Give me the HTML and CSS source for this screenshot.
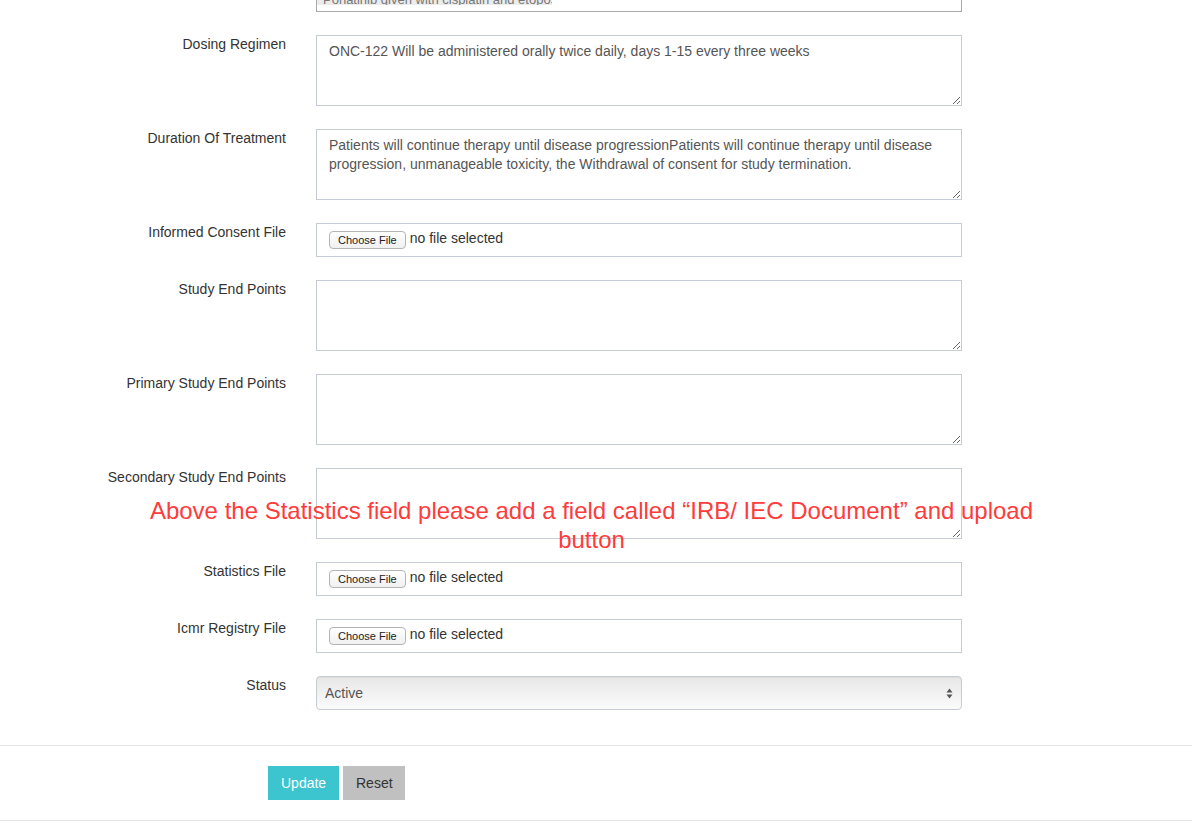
FILE: index.html
```html
<!DOCTYPE html>
<html lang="en">
<head>
    <meta charset="UTF-8">
    <meta name="viewport" content="width=device-width, initial-scale=1.0">
    <title>Edit Study</title>
    <link rel="stylesheet" href="styles.css">
</head>
<body>
    <div class="page">
        <form class="form-horizontal">
            <div class="form-group">
                <div class="label"></div>
                <div class="clipped-box">
                    <span class="tag">Ponatinib given with cisplatin and etoposide</span>
                </div>
            </div>

            <div class="form-group">
                <label class="label">Dosing Regimen</label>
                <textarea class="form-control" rows="3">ONC-122 Will be administered orally twice daily, days 1-15 every three weeks</textarea>
            </div>

            <div class="form-group">
                <label class="label">Duration Of Treatment</label>
                <textarea class="form-control" rows="3">Patients will continue therapy until disease progressionPatients will continue therapy until disease progression, unmanageable toxicity, the Withdrawal of consent for study termination.</textarea>
            </div>

            <div class="form-group">
                <label class="label">Informed Consent File</label>
                <div class="file-box">
                    <span class="file-btn">Choose File</span>
                    <span class="file-name">no file selected</span>
                </div>
            </div>

            <div class="form-group">
                <label class="label">Study End Points</label>
                <textarea class="form-control" rows="3"></textarea>
            </div>

            <div class="form-group">
                <label class="label">Primary Study End Points</label>
                <textarea class="form-control" rows="3"></textarea>
            </div>

            <div class="form-group">
                <label class="label">Secondary Study End Points</label>
                <textarea class="form-control" rows="3"></textarea>
            </div>

            <div class="form-group">
                <label class="label">Statistics File</label>
                <div class="file-box">
                    <span class="file-btn">Choose File</span>
                    <span class="file-name">no file selected</span>
                </div>
            </div>

            <div class="form-group">
                <label class="label">Icmr Registry File</label>
                <div class="file-box">
                    <span class="file-btn">Choose File</span>
                    <span class="file-name">no file selected</span>
                </div>
            </div>

            <div class="form-group">
                <label class="label">Status</label>
                <div class="select-box">
                    <span>Active</span>
                    <svg class="updown" width="7" height="11" viewBox="0 0 7 11">
                        <path d="M3.5 0.5 L6.5 4.5 L0.5 4.5 Z" fill="#555"/>
                        <path d="M3.5 10.5 L6.5 6.5 L0.5 6.5 Z" fill="#555"/>
                    </svg>
                </div>
            </div>

            <div class="form-actions">
                <button type="button" class="btn btn-update">Update</button>
                <button type="button" class="btn btn-reset">Reset</button>
            </div>
        </form>

        <!-- review note pasted over the screenshot -->
        <div class="note">Above the Statistics field please add a field called “IRB/ IEC Document” and upload button</div>
    </div>
</body>
</html>
```

FILE: styles.css
```css
body {
    margin: 0;
    background: #fff;
    font-family: "Liberation Sans", Arial, sans-serif;
    font-size: 14px;
    color: #333;
}
.page {
    position: relative;
}
.form-group {
    display: flex;
    gap: 30px;
    margin-bottom: 23px;
}
.label {
    width: 286px;
    flex: none;
    text-align: right;
    line-height: 18px;
}
.form-control {
    box-sizing: border-box;
    width: 646px;
    height: 71px;
    margin: 0;
    padding: 6px 12px;
    border: 1px solid #c5ccd6;
    border-radius: 0;
    font-family: "Liberation Sans", Arial, sans-serif;
    font-size: 14px;
    line-height: 19px;
    color: #555;
    resize: vertical;
    outline: none;
}
.clipped-box {
    box-sizing: border-box;
    width: 646px;
    height: 12px;
    border: 1px solid #a9a9a9;
    border-top: none;
    overflow: hidden;
}
.tag {
    display: block;
    width: 235px;
    height: 5px;
    background: #ececec;
    color: #777;
    font-size: 13px;
    line-height: 0;
    overflow: hidden;
    white-space: nowrap;
    padding-left: 6px;
    box-sizing: border-box;
}
.file-box {
    box-sizing: border-box;
    width: 646px;
    height: 34px;
    border: 1px solid #c5ccd6;
    padding: 0 12px 4px;
    display: flex;
    align-items: center;
    gap: 4px;
}
.file-btn {
    box-sizing: border-box;
    height: 18px;
    padding: 0 8px;
    border: 1px solid #b4b4b4;
    border-radius: 4px;
    background: linear-gradient(#fff, #f0f0f0);
    font-size: 11px;
    line-height: 16px;
    color: #222;
    margin-top: 4px;
}
.file-name {
    color: #333;
    font-size: 14px;
}
.select-box {
    box-sizing: border-box;
    width: 646px;
    height: 34px;
    border: 1px solid #c5ccd6;
    border-radius: 4px;
    background: linear-gradient(#e7e7e7, #fbfbfb);
    box-shadow: inset 0 1px 1px rgba(0,0,0,0.05);
    padding: 0 8px;
    display: flex;
    align-items: center;
    justify-content: space-between;
    color: #555;
}
.form-actions {
    margin-top: 35px;
    border-top: 1px solid #e5e5e5;
    border-bottom: 1px solid #e5e5e5;
    padding: 20px 0 20px 268px;
    display: flex;
    gap: 4px;
}
.btn {
    height: 34px;
    border: none;
    border-radius: 0;
    font-family: "Liberation Sans", Arial, sans-serif;
    font-size: 14px;
    padding: 0 13px;
    cursor: pointer;
}
.btn-update {
    background: #3cc4cf;
    color: #fff;
    width: 71px;
}
.btn-reset {
    background: #c0c0c0;
    color: #333;
    width: 62px;
}
.note {
    position: absolute;
    left: 140px;
    top: 496px;
    width: 903px;
    text-align: center;
    color: #ff3b3b;
    font-size: 24px;
    line-height: 29px;
}
```
